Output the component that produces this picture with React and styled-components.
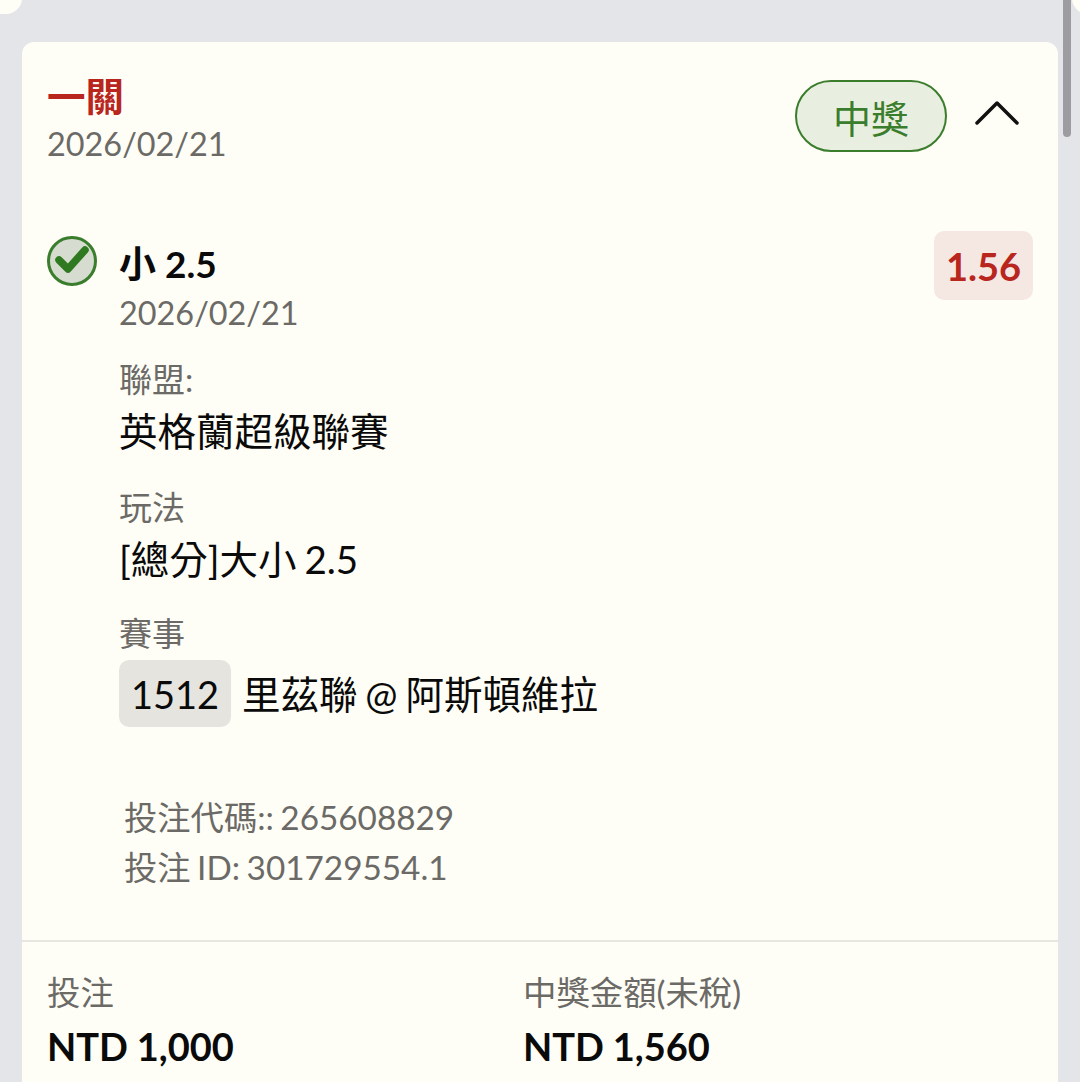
import React from 'react';
import styled, { createGlobalStyle } from 'styled-components';

const GlobalStyle = createGlobalStyle`
  html, body {
    margin: 0;
    padding: 0;
    height: 100%;
    overflow: hidden;
    background: #e3e5e8;
    font-family: Lato, "Noto Sans CJK TC", sans-serif;
  }
`;

const Page = styled.div`
  position: relative;
  width: 1080px;
  height: 1082px;
  overflow: hidden;
  box-sizing: border-box;
  padding: 42px 22px 0;
  background: #e3e5e8;
`;

const CornerLeft = styled.div`
  position: absolute;
  left: -20px;
  top: -30px;
  width: 42px;
  height: 44px;
  background: #fffef6;
  border-radius: 16px;
`;

const CornerRight = styled.div`
  position: absolute;
  left: 1072px;
  top: -30px;
  width: 50px;
  height: 44px;
  background: #fffef6;
  border-radius: 16px;
`;

const ScrollThumb = styled.div`
  position: absolute;
  left: 1063px;
  top: -10px;
  width: 8px;
  height: 147px;
  background: #9d9da1;
  border-radius: 4px;
`;

const Card = styled.div`
  background: #fffef6;
  border-radius: 12px;
  height: 1100px;
  box-sizing: border-box;
`;

const Header = styled.div`
  display: flex;
  justify-content: space-between;
  align-items: flex-start;
  padding: 30px 39px 0 25px;
`;

const Title = styled.div`
  color: #b8261e;
  font-size: 38.5px;
  font-weight: 700;
  line-height: 49px;
`;

const DateText = styled.div`
  color: #6b6a66;
  font-size: 32.4px;
  line-height: 46px;
`;

const HeaderRight = styled.div`
  display: flex;
  align-items: center;
  gap: 28px;
  padding-top: 8px;
`;

const StatusPill = styled.div`
  width: 152px;
  height: 72px;
  box-sizing: border-box;
  border: 2.5px solid #3a7d2c;
  border-radius: 36px;
  background: #e9efe0;
  color: #3a7d2c;
  font-size: 38px;
  display: flex;
  align-items: center;
  justify-content: center;
`;

const ChevronWrap = styled.div`
  display: flex;
  margin-bottom: 6px;
`;

const Selection = styled.div`
  display: flex;
  align-items: flex-start;
  padding: 64px 25px 0 25px;
`;

const CheckWrap = styled.div`
  width: 50px;
  height: 50px;
  flex: none;
  margin-top: 5px;
  margin-right: 22px;
`;

const SelectionBody = styled.div`
  flex: 1;
`;

const SelectionName = styled.div`
  color: #0a0a0a;
  font-size: 37px;
  font-weight: 700;
  line-height: 52px;
  margin-top: 7px;
`;

const OddsBadge = styled.div`
  width: 99px;
  height: 69px;
  flex: none;
  border-radius: 10px;
  background: #f5e8e3;
  color: #b8261e;
  font-size: 38px;
  font-weight: 700;
  display: flex;
  align-items: center;
  justify-content: center;
`;

const Field = styled.div`
  margin-top: ${(p) => p.$top}px;
`;

const FieldLabel = styled.div`
  color: #6b6a66;
  font-size: 33px;
  line-height: 48px;
`;

const FieldValue = styled.div`
  color: #0a0a0a;
  font-size: 38.5px;
  line-height: 56px;
  word-spacing: -2px;
  display: flex;
  align-items: center;
`;

const MatchRow = styled(FieldValue)`
  margin-top: 3px;
`;

const MatchNo = styled.span`
  display: inline-flex;
  align-items: center;
  justify-content: center;
  width: 112px;
  height: 67px;
  margin-right: 11px;
  border-radius: 10px;
  background: #e5e4df;
  font-size: 38px;
`;

const Codes = styled.div`
  color: #6b6a66;
  font-size: 33.3px;
  line-height: 50px;
  word-spacing: -2px;
  padding: 65px 0 0 102px;
`;

const Divider = styled.div`
  height: 2px;
  margin-top: 48px;
  background: #e8e6e0;
`;

const Totals = styled.div`
  display: grid;
  grid-template-columns: 476px 1fr;
  padding: 27px 25px 0;
`;

const TotalLabel = styled.div`
  color: #6b6a66;
  font-size: 33.4px;
  line-height: 46px;
`;

const TotalValue = styled.div`
  color: #0a0a0a;
  font-size: 38px;
  font-weight: 700;
  line-height: 56px;
  margin-top: 3px;
  word-spacing: -0.5px;
`;

const CheckIcon = () => (
  <svg width="50" height="50" viewBox="0 0 50 50">
    <circle cx="25" cy="25" r="23.5" fill="#d6dcd0" stroke="#3a7d2c" strokeWidth="3" />
    <path
      d="M12 24l9 9L38 14"
      fill="none"
      stroke="#2f7a20"
      strokeWidth="7.5"
      strokeLinecap="round"
      strokeLinejoin="round"
    />
  </svg>
);

const ChevronUp = () => (
  <svg width="44" height="26" viewBox="0 0 44 26">
    <path d="M2 23L22 3l20 20" fill="none" stroke="#111" strokeWidth="3.5" strokeLinecap="round" strokeLinejoin="round" />
  </svg>
);

export default function App() {
  return (
    <Page>
      <GlobalStyle />
      <CornerLeft />
      <CornerRight />
      <ScrollThumb />
      <Card>
        <Header>
          <div>
            <Title>一關</Title>
            <DateText>2026/02/21</DateText>
          </div>
          <HeaderRight>
            <StatusPill>中獎</StatusPill>
            <ChevronWrap>
              <ChevronUp />
            </ChevronWrap>
          </HeaderRight>
        </Header>

        <Selection>
          <CheckWrap>
            <CheckIcon />
          </CheckWrap>
          <SelectionBody>
            <SelectionName>小 2.5</SelectionName>
            <DateText>2026/02/21</DateText>
            <Field $top={19}>
              <FieldLabel>聯盟:</FieldLabel>
              <FieldValue>英格蘭超級聯賽</FieldValue>
            </Field>
            <Field $top={24}>
              <FieldLabel>玩法</FieldLabel>
              <FieldValue>[總分]大小 2.5</FieldValue>
            </Field>
            <Field $top={22}>
              <FieldLabel>賽事</FieldLabel>
              <MatchRow>
                <MatchNo>1512</MatchNo>
                里茲聯 @ 阿斯頓維拉
              </MatchRow>
            </Field>
          </SelectionBody>
          <OddsBadge>1.56</OddsBadge>
        </Selection>

        <Codes>
          <div>投注代碼:: 265608829</div>
          <div>投注 ID: 301729554.1</div>
        </Codes>

        <Divider />

        <Totals>
          <div>
            <TotalLabel>投注</TotalLabel>
            <TotalValue>NTD 1,000</TotalValue>
          </div>
          <div>
            <TotalLabel>中獎金額(未稅)</TotalLabel>
            <TotalValue>NTD 1,560</TotalValue>
          </div>
        </Totals>
      </Card>
    </Page>
  );
}
